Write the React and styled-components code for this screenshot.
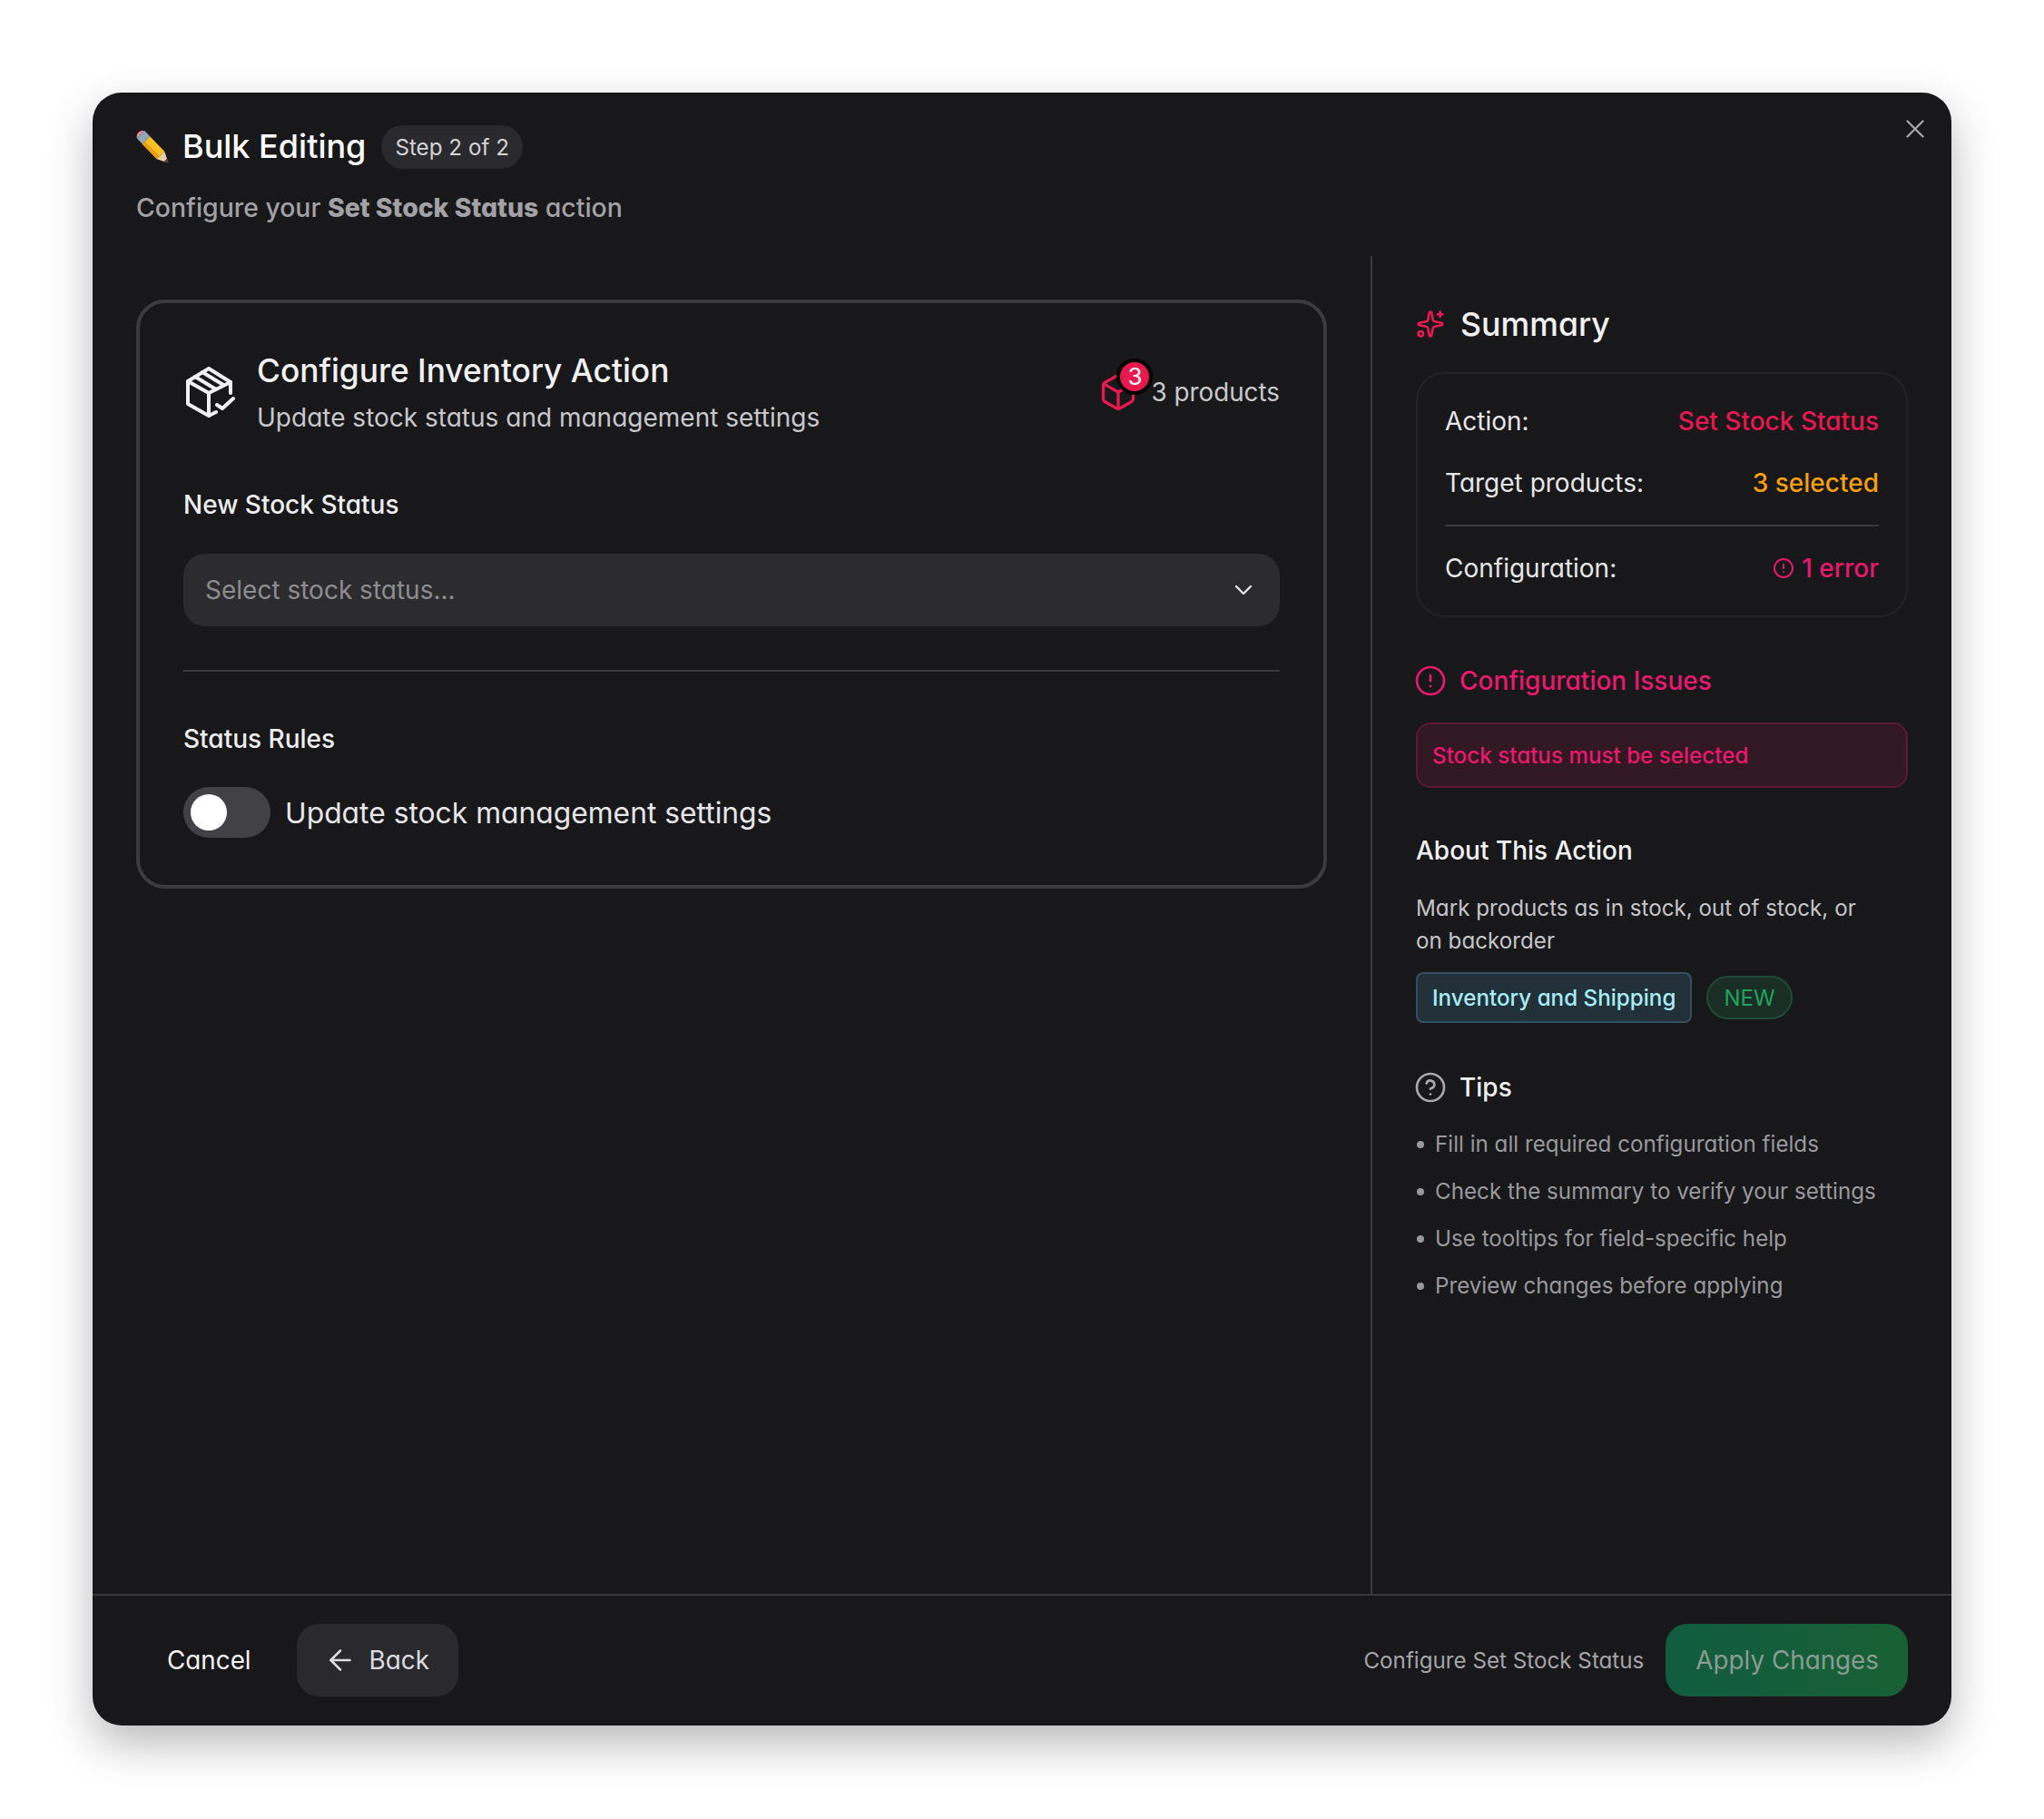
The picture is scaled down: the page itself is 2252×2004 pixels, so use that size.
import React, { useState } from "react";
import styled, { createGlobalStyle } from "styled-components";
import { X, ChevronDown, ArrowLeft, CircleAlert, CircleHelp, Sparkles, Box } from "lucide-react";

const GlobalStyle = createGlobalStyle`
  html, body {
    margin: 0;
    padding: 0;
    background: #ffffff;
  }
  body {
    font-family: "Inter", "Liberation Sans", sans-serif;
    font-feature-settings: "cv11" 1;
    -webkit-font-smoothing: antialiased;
  }
  * {
    box-sizing: border-box;
  }
`;

const Page = styled.div`
  padding: 102px;
  width: 2252px;
  height: 2004px;
`;

const Modal = styled.div`
  position: relative;
  width: 2048px;
  height: 1799px;
  display: flex;
  flex-direction: column;
  background: #18181b;
  border-radius: 32px;
  box-shadow: 0 20px 50px rgba(0, 0, 0, 0.28);
  color: #ffffff;
`;

const CloseButton = styled.button`
  position: absolute;
  top: 23px;
  right: 23px;
  width: 34px;
  height: 34px;
  display: flex;
  padding: 0;
  border: none;
  background: transparent;
  color: #a3a3a8;
`;

const Header = styled.header`
  height: 180px;
  padding: 36px 48px 0;
`;

const TitleRow = styled.div`
  display: flex;
  align-items: center;
  height: 48px;
`;

const Title = styled.h1`
  margin: 0 17px 3px 15px;
  font-size: 36px;
  line-height: 48px;
  font-weight: 500;
`;

const StepBadge = styled.span`
  height: 48px;
  padding: 0 15px;
  display: flex;
  align-items: center;
  border-radius: 24px;
  background: #2a2a2e;
  color: #d4d4d8;
  font-size: 24.2px;
`;

const Subtitle = styled.p`
  margin: 19px 0 0;
  font-size: 28.4px;
  line-height: 48px;
  font-weight: 500;
  color: #a1a1a6;

  strong {
    font-weight: 800;
  }
`;

const Main = styled.main`
  flex: 1;
  display: flex;
  min-height: 0;
`;

const LeftPanel = styled.section`
  width: 1408px;
  padding: 48px 48px 0;
`;

const Card = styled.div`
  height: 649px;
  padding: 47px 48px 48px;
  border: 4px solid #3c3c40;
  border-radius: 32px;
`;

const CardHeader = styled.div`
  display: flex;
  align-items: center;
  justify-content: space-between;
`;

const CardHeading = styled.div`
  display: flex;
  align-items: center;
  gap: 22px;

  > svg {
    margin-left: 3px;
  }
`;

const CardTitle = styled.h2`
  margin: 0;
  font-size: 35.3px;
  line-height: 56px;
  font-weight: 500;
  color: #f1f1f3;
`;

const CardSub = styled.p`
  margin: 1px 0 0;
  font-size: 28px;
  line-height: 44px;
  color: #c8c8cc;
`;

const ProductCount = styled.div`
  display: flex;
  align-items: center;
  gap: 14px;
  font-size: 27.8px;
  color: #c8c8cc;
`;

const CountIcon = styled.span`
  position: relative;
  display: flex;
  color: #e8194f;
`;

const CountBubble = styled.span`
  position: absolute;
  top: -15px;
  left: 20px;
  width: 40px;
  height: 40px;
  display: flex;
  align-items: center;
  justify-content: center;
  border-radius: 50%;
  border: 4px solid #000000;
  background: #e8194f;
  color: #ffffff;
  font-size: 26px;
`;

const FieldLabel = styled.div`
  margin-top: ${(p) => p.$top}px;
  font-size: 28px;
  line-height: 40px;
  font-weight: 500;
  color: #eeeef0;
`;

const Select = styled.div`
  margin-top: 34px;
  height: 80px;
  padding: 0 24px;
  display: flex;
  align-items: center;
  justify-content: space-between;
  border-radius: 24px;
  background: #2c2c2f;
  font-size: 28px;
  color: #8c8c91;

  svg {
    color: #e4e4e7;
  }
`;

const Rule = styled.hr`
  margin: ${(p) => p.$margin};
  height: 2px;
  border: none;
  background: #3a3a3e;
`;

const ToggleRow = styled.label`
  margin-top: 33px;
  display: flex;
  align-items: center;
  gap: 16px;
  font-size: 31.8px;
  color: #e6e6e9;
`;

const ToggleTrack = styled.span`
  width: 96px;
  height: 56px;
  padding: 8px;
  display: flex;
  justify-content: ${(p) => (p.$on ? "flex-end" : "flex-start")};
  border-radius: 28px;
  background: #424246;
`;

const ToggleThumb = styled.span`
  width: 40px;
  height: 40px;
  border-radius: 50%;
  background: #ffffff;
`;

const RightPanel = styled.aside`
  width: 640px;
  padding: 48px 48px 0;
  border-left: 2px solid #3a3a3e;
  display: flex;
  flex-direction: column;
`;

const SectionTitle = styled.h3`
  margin: ${(p) => p.$margin || 0};
  display: flex;
  align-items: center;
  gap: ${(p) => p.$gap || 14}px;
  font-size: ${(p) => p.$size || 28}px;
  line-height: ${(p) => p.$line || 40}px;
  font-weight: 500;
  color: ${(p) => p.$color || "#f1f1f3"};

  svg {
    flex: none;
    margin-left: ${(p) => p.$iconShift ?? -2}px;
    color: ${(p) => p.$iconColor || "currentColor"};
  }
`;

const SummaryBox = styled.div`
  margin-top: 26px;
  padding: 30px;
  display: flex;
  flex-direction: column;
  gap: 24px;
  border: 2px solid #232327;
  border-radius: 32px;
`;

const SummaryRow = styled.div`
  display: flex;
  align-items: center;
  justify-content: space-between;
  font-size: 28px;
  line-height: 44px;
  color: #e6e6e9;
`;

const SummaryValue = styled.span`
  display: flex;
  align-items: center;
  gap: 8px;
  color: ${(p) => p.$color};
  font-weight: 500;
`;

const SummaryRule = styled.hr`
  margin: 0;
  height: 2px;
  border: none;
  background: #3a3a3e;
`;

const ErrorBox = styled.div`
  margin-top: 26px;
  height: 72px;
  padding: 0 16px;
  display: flex;
  align-items: center;
  border: 2px solid #5c1a35;
  border-radius: 16px;
  background: #311822;
  color: #e8196e;
  font-size: 24.2px;
  font-weight: 500;
`;

const Description = styled.p`
  margin: 26px 0 0;
  max-width: 500px;
  font-size: 24.2px;
  line-height: 36px;
  color: #c5c5c9;
`;

const TagRow = styled.div`
  margin-top: 16px;
  display: flex;
  align-items: center;
  gap: 16px;
`;

const CategoryTag = styled.span`
  height: 56px;
  padding: 0 16px;
  display: flex;
  align-items: center;
  border: 2px solid #32505f;
  border-radius: 8px;
  background: #22303a;
  color: #a8ecf5;
  font-size: 24.2px;
  font-weight: 500;
`;

const NewPill = styled.span`
  height: 48px;
  padding: 0 17px;
  display: flex;
  align-items: center;
  border: 2px solid #1f4a33;
  border-radius: 24px;
  background: #1a2e25;
  color: #1fa35f;
  font-size: 24px;
`;

const TipList = styled.ul`
  margin: 25px 0 0;
  padding: 0;
  list-style: none;
  display: flex;
  flex-direction: column;
  gap: 16px;
`;

const Tip = styled.li`
  display: flex;
  align-items: center;
  gap: 12px;
  font-size: 24.2px;
  line-height: 36px;
  color: #98989d;

  &::before {
    content: "";
    margin-left: 1px;
    width: 8px;
    height: 8px;
    border-radius: 50%;
    background: #98989d;
  }
`;

const Footer = styled.footer`
  height: 145px;
  padding: 31px 48px 0;
  display: flex;
  justify-content: space-between;
  border-top: 2px solid #3a3a3e;
`;

const FooterGroup = styled.div`
  display: flex;
  align-items: flex-start;
  gap: ${(p) => p.$gap}px;
`;

const FooterButton = styled.button`
  height: 80px;
  padding: ${(p) => p.$padding};
  display: flex;
  align-items: center;
  gap: 14px;
  border: none;
  border-radius: 24px;
  background: ${(p) => p.$bg};
  color: ${(p) => p.$color};
  font-family: inherit;
  font-feature-settings: inherit;
  font-size: 27.8px;
`;

const FooterNote = styled.span`
  height: 80px;
  display: flex;
  align-items: center;
  font-size: 24.2px;
  color: #a5a5a9;
`;

const PencilIcon = () => (
  <svg width="36" height="36" viewBox="0 0 36 36">
    <path d="M9.2 -0.2 L0.8 8.2 Q0 4 2.5 2 Q5 -0.5 9.2 -0.2 Z" fill="#ee8a94" />
    <path d="M9.2 -0.2 L15.2 6.3 L6.8 14.7 L0.8 8.2 Z" fill="#8fa6b8" />
    <path d="M15.2 6.3 L31.2 22.8 L22.8 31.2 L6.8 14.7 Z" fill="#f8c022" />
    <path d="M6.8 14.7 L9.8 11.7 L25.8 28.2 L22.8 31.2 Z" fill="#e89c10" />
    <path d="M31.2 22.8 L35.5 35.5 L22.8 31.2 Z" fill="#e9cfa2" />
    <path d="M33.9 30.8 L35.5 35.5 L30.8 33.9 Z" fill="#3a3a3a" />
  </svg>
);

const PackageCheckIcon = () => (
  <svg width="56" height="56" viewBox="0 0 56 56" fill="none" stroke="#f1f1f3" strokeWidth="4" strokeLinecap="round" strokeLinejoin="round">
    <path d="M49 29 V17 L25 2 L2 16 V41 L25 54 L33 50" />
    <path d="M2 16 L25 29 L49 17" />
    <path d="M25 29 V54" />
    <path d="M10 11 L33 25" />
    <path d="M18 6 L41 20" />
    <path d="M34 42 L40 46 L52 35" />
  </svg>
);

const TIPS = [
  "Fill in all required configuration fields",
  "Check the summary to verify your settings",
  "Use tooltips for field-specific help",
  "Preview changes before applying",
];

export default function App() {
  const [manageStock, setManageStock] = useState(false);

  return (
    <Page>
      <GlobalStyle />
      <Modal>
        <CloseButton aria-label="Close">
          <X size={34} strokeWidth={1.7} />
        </CloseButton>

        <Header>
          <TitleRow>
            <PencilIcon />
            <Title>Bulk Editing</Title>
            <StepBadge>Step 2 of 2</StepBadge>
          </TitleRow>
          <Subtitle>
            Configure your <strong>Set Stock Status</strong> action
          </Subtitle>
        </Header>

        <Main>
          <LeftPanel>
            <Card>
              <CardHeader>
                <CardHeading>
                  <PackageCheckIcon />
                  <div>
                    <CardTitle>Configure Inventory Action</CardTitle>
                    <CardSub>Update stock status and management settings</CardSub>
                  </div>
                </CardHeading>
                <ProductCount>
                  <CountIcon>
                    <Box size={44} strokeWidth={1.8} />
                    <CountBubble>3</CountBubble>
                  </CountIcon>
                  3 products
                </ProductCount>
              </CardHeader>

              <FieldLabel $top={54}>New Stock Status</FieldLabel>
              <Select>
                Select stock status...
                <ChevronDown size={32} strokeWidth={1.8} />
              </Select>

              <Rule $margin="48px 0 54px" />

              <FieldLabel $top={0}>Status Rules</FieldLabel>
              <ToggleRow onClick={() => setManageStock(!manageStock)}>
                <ToggleTrack $on={manageStock}>
                  <ToggleThumb />
                </ToggleTrack>
                Update stock management settings
              </ToggleRow>
            </Card>
          </LeftPanel>

          <RightPanel>
            <SectionTitle $size={35.7} $line={54} $gap={17} $iconShift={0} $iconColor="#e8194f">
              <Sparkles size={32} strokeWidth={2} />
              Summary
            </SectionTitle>
            <SummaryBox>
              <SummaryRow>
                Action:
                <SummaryValue $color="#e5194f">Set Stock Status</SummaryValue>
              </SummaryRow>
              <SummaryRow>
                Target products:
                <SummaryValue $color="#f59f0a">3 selected</SummaryValue>
              </SummaryRow>
              <SummaryRule />
              <SummaryRow>
                Configuration:
                <SummaryValue $color="#e5186e">
                  <CircleAlert size={24} strokeWidth={2} />1 error
                </SummaryValue>
              </SummaryRow>
            </SummaryBox>

            <SectionTitle $margin="50px 0 0" $color="#e8196e">
              <CircleAlert size={36} strokeWidth={1.8} />
              Configuration Issues
            </SectionTitle>
            <ErrorBox>Stock status must be selected</ErrorBox>

            <SectionTitle $margin="49px 0 0">About This Action</SectionTitle>
            <Description>Mark products as in stock, out of stock, or on backorder</Description>
            <TagRow>
              <CategoryTag>Inventory and Shipping</CategoryTag>
              <NewPill>NEW</NewPill>
            </TagRow>

            <SectionTitle $margin="51px 0 0" $iconColor="#a8a8ac">
              <CircleHelp size={36} strokeWidth={1.8} />
              Tips
            </SectionTitle>
            <TipList>
              {TIPS.map((tip) => (
                <Tip key={tip}>{tip}</Tip>
              ))}
            </TipList>
          </RightPanel>
        </Main>

        <Footer>
          <FooterGroup $gap={16}>
            <FooterButton $padding="0 34px" $bg="transparent" $color="#f4f4f5">
              Cancel
            </FooterButton>
            <FooterButton $padding="0 32px 0 30px" $bg="#2a2a2e" $color="#dcdce0">
              <ArrowLeft size={36} strokeWidth={1.7} />
              Back
            </FooterButton>
          </FooterGroup>
          <FooterGroup $gap={24}>
            <FooterNote>Configure Set Stock Status</FooterNote>
            <FooterButton $padding="0 32px 0 33px" $bg="linear-gradient(90deg, #115c40, #186035)" $color="#8a9c92">
              Apply Changes
            </FooterButton>
          </FooterGroup>
        </Footer>
      </Modal>
    </Page>
  );
}
